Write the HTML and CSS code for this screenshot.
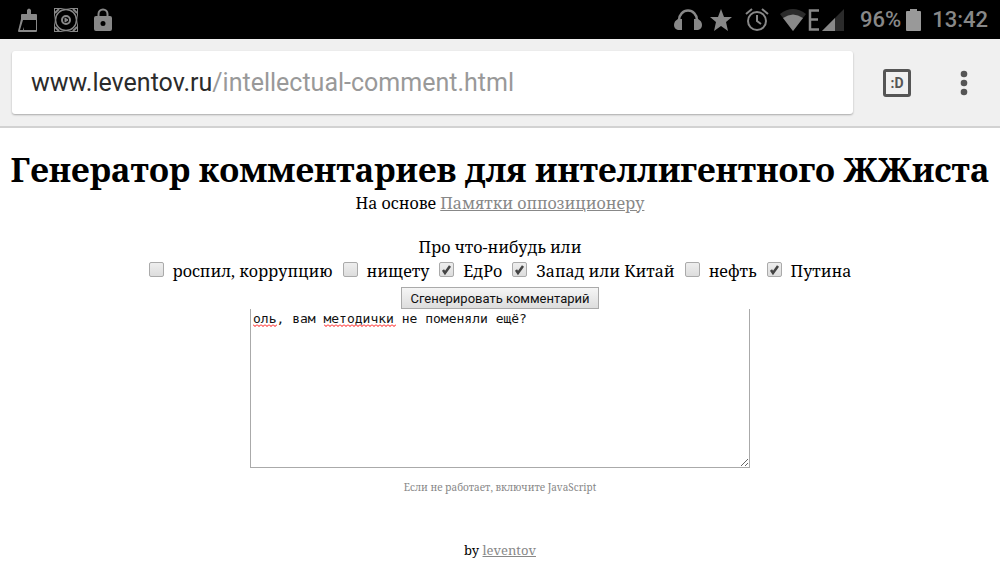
FILE: index.html
```
<!DOCTYPE html>
<html lang="ru">
<head>
    <meta charset="UTF-8">
    <meta name="viewport" content="width=device-width, initial-scale=1.0">
    <title>Генератор комментариев</title>
    <link rel="stylesheet" href="styles.css">
</head>
<body>
    <div class="status-bar">
        <svg class="icon-cleaner" width="20" height="24" viewBox="0 0 20 24">
            <path fill="#888" fill-rule="evenodd" d="M9 2q2-3 4 0v4h5q1 0 1 1v16q0 1-1 1H1q-1 0-1-1L3 11V7q0-1 1-1h5zM5 12L2 22h3l1-3v3h12V12z"/>
        </svg>
        <svg class="icon-disc" width="26" height="26" viewBox="0 0 26 26" fill="none" stroke="#888">
            <rect x="1.500" y="1.500" width="23" height="23" stroke-width="1"/>
            <path d="M2 6l4-4M20 2l4 4M24 20l-4 4M6 24l-4-4" stroke-width="2"/>
            <circle cx="13" cy="13" r="11.500" stroke="#000" stroke-width="1"/>
            <circle cx="13" cy="13" r="10.500" stroke-width="1.500"/>
            <circle cx="13" cy="13" r="4" stroke-width="2"/>
            <path d="M12 11l3 2-3 2z" fill="#888"/>
        </svg>
        <svg class="icon-lock" width="18" height="24" viewBox="0 0 18 24">
            <path d="M4.500 9V6a4.500 4.500 0 0 1 9 0v3" fill="none" stroke="#888" stroke-width="2"/>
            <path fill="#888" fill-rule="evenodd" d="M2 8h14q2 0 2 2v11q0 2-2 2H2q-2 0-2-2V10q0-2 2-2zM9 13a2.500 2.500 0 1 0 0 5a2.500 2.500 0 0 0 0-5z"/>
        </svg>
        <div class="status-right">
            <svg width="28" height="22" viewBox="0 0 28 22">
                <path d="M5 12V11a9 9.500 0 0 1 18 0v1" fill="none" stroke="#888" stroke-width="2.500"/>
                <path fill="#888" d="M8 10v11H4q-4-1-4-5t4-6zM20 10v11h4q4-1 4-5t-4-6z"/>
            </svg>
            <svg class="icon-star" width="24" height="22" viewBox="0 0 24 22">
                <path fill="#888" d="M12 0l3 8h8l-6 5 2 9-7-5-7 5 2-9-6-5h8z"/>
            </svg>
            <svg class="icon-alarm" width="24" height="24" viewBox="0 0 24 24" fill="none" stroke="#888" stroke-width="2">
                <circle cx="12" cy="13" r="9"/>
                <path d="M1 6l6-5M23 6l-6-5M12 7v6l4 3"/>
            </svg>
            <svg class="icon-wifi" width="26" height="22" viewBox="0 0 26 22">
                <path fill="#2b2b2b" d="M13 22L0 5Q13-5 26 5z"/>
                <path fill="#888" d="M13 22L3 9q10-7 20 0z"/>
            </svg>
            <svg width="11" height="22" viewBox="0 0 11 22">
                <path d="M11 1.500H2v19h9M2 10.500h8" fill="none" stroke="#888" stroke-width="2.500"/>
            </svg>
            <svg class="icon-signal" width="22" height="22" viewBox="0 0 22 22">
                <path fill="#2b2b2b" d="M22 0v22H0z"/>
                <path fill="#888" d="M13 9v13H0z"/>
            </svg>
            <span class="battery-level">96%</span>
            <svg class="icon-battery" width="15" height="22" viewBox="0 0 15 22">
                <path fill="#999" d="M4 0h7v2h3q1 0 1 1v18q0 1-1 1H1q-1 0-1-1V3q0-1 1-1h3z"/>
            </svg>
            <span>13:42</span>
        </div>
    </div>
    <div class="toolbar">
        <a class="address" href="#"><span class="host">www.leventov.ru</span>/intellectual-comment.html</a>
        <button class="tabs" type="button" aria-label="Вкладки">:D</button>
        <button class="menu" type="button" aria-label="Меню">
            <svg width="8" height="26" viewBox="0 0 8 26" fill="#555">
                <circle cx="4" cy="4" r="3.300"/>
                <circle cx="4" cy="13" r="3.300"/>
                <circle cx="4" cy="22" r="3.300"/>
            </svg>
        </button>
    </div>
    <main>
        <h1>Генератор комментариев для интеллигентного ЖЖиста</h1>
        <p>На основе <a href="#">Памятки оппозиционеру</a></p>
        <form>
            <p class="about">Про что-нибудь или</p>
            <div class="topics">
                <label><input type="checkbox">роспил, коррупцию</label>
                <label><input type="checkbox">нищету</label>
                <label><input type="checkbox" checked>ЕдРо</label>
                <label><input type="checkbox" checked>Запад или Китай</label>
                <label><input type="checkbox">нефть</label>
                <label><input type="checkbox" checked>Путина</label>
            </div>
            <button class="generate" type="button">Сгенерировать комментарий</button>
            <div class="comment">
                <textarea aria-label="Комментарий" spellcheck="false">оль, вам методички не поменяли ещё?</textarea>
                <span class="typo typo-first"></span>
                <span class="typo typo-second"></span>
            </div>
        </form>
        <p class="hint">Если не работает, включите JavaScript</p>
        <p class="author">by <a href="#">leventov</a></p>
    </main>
</body>
</html>
```
FILE: styles.css
```
* {
    box-sizing: border-box;
}
body {
    margin: 0;
    background: #fff;
    color: #000;
    font-family: "Noto Serif", "DejaVu Serif Condensed", "DejaVu Serif", serif;
    font-size: 16px;
    line-height: 24px;
}
.status-bar {
    display: flex;
    align-items: center;
    height: 39px;
    padding: 0 12px 0 18px;
    background: #000;
    color: #888;
    font-family: Roboto, sans-serif;
    font-size: 22px;
    font-weight: 500;
}
.icon-disc {
    margin-left: 15px;
}
.icon-lock {
    margin-left: 15px;
}
.status-right {
    display: flex;
    align-items: center;
    margin-left: auto;
}
.icon-star {
    margin-left: 7px;
}
.icon-alarm {
    margin-left: 12px;
}
.icon-wifi {
    margin-left: 11px;
}
.icon-wifi + svg {
    margin-left: 2px;
}
.icon-signal {
    margin-left: 3px;
}
.battery-level {
    margin-left: 16px;
}
.icon-battery {
    margin: 0 11px 0 5px;
}
.toolbar {
    display: flex;
    align-items: center;
    padding: 12px;
    background: #f0f0f0;
    border-bottom: 2px solid #d2d2d2;
}
.address {
    flex: 1;
    min-width: 0;
    padding: 0 19px;
    background: #fff;
    border-radius: 3px;
    box-shadow: 0 1px 2px rgba(0,0,0,0.3);
    color: #999;
    font-family: Roboto, sans-serif;
    font-size: 25px;
    line-height: 63px;
    text-decoration: none;
    white-space: nowrap;
    overflow: hidden;
}
.host {
    color: #2b2b2b;
}
.tabs {
    width: 28px;
    height: 28px;
    margin: 0 41px 0 30px;
    padding: 0;
    border: 3px solid #555;
    border-radius: 3px;
    background: none;
    color: #555;
    font: bold 14px Roboto, sans-serif;
}
.menu {
    display: flex;
    justify-content: center;
    width: 24px;
    margin-right: 12px;
    padding: 0;
    border: none;
    background: none;
}
main {
    padding-top: 21px;
    text-align: center;
}
h1 {
    margin: 0;
    font-size: 33px;
    line-height: 42px;
}
p {
    margin: 0;
}
main a {
    color: #888;
}
.about {
    margin-top: 20px;
}
.topics {
    display: flex;
    flex-wrap: wrap;
    justify-content: center;
    gap: 10px;
}
.topics label {
    display: flex;
    align-items: center;
    gap: 9px;
}
.topics input {
    appearance: none;
    width: 15px;
    height: 15px;
    margin: 0 0 4px;
    border: 1px solid #aaa;
    border-radius: 2px;
    background: linear-gradient(#eee, #ddd);
}
.topics input:checked {
    background: url("data:image/svg+xml,%3Csvg xmlns='http://www.w3.org/2000/svg' viewBox='0 0 13 13'%3E%3Cpath d='M3 7l2 3 5-7' fill='none' stroke='%23444' stroke-width='2.5'/%3E%3C/svg%3E"), linear-gradient(#eee, #ddd);
}
.generate {
    display: block;
    height: 22px;
    margin: 4px auto 0;
    padding: 0 8px;
    border: 1px solid #aaa;
    background: linear-gradient(#f5f5f5, #ddd);
    color: #111;
    font: 13px Roboto, sans-serif;
}
.comment {
    position: relative;
    width: 50%;
    margin: 0 auto;
}
.comment textarea {
    display: block;
    width: 100%;
    height: 159px;
    padding: 2px;
    border: 1px solid #aaa;
    border-top: none;
    color: #111;
    font: 13px/16px "DejaVu Sans Mono", monospace;
}
/* spelling marks */
.typo {
    position: absolute;
    top: 15px;
    height: 3px;
    background: url("data:image/svg+xml,%3Csvg xmlns='http://www.w3.org/2000/svg' width='4' height='3'%3E%3Cpath d='M0 .5l2 2 2-2' fill='none' stroke='red'/%3E%3C/svg%3E") repeat-x;
}
.typo-first {
    left: 3px;
    width: 24px;
}
.typo-second {
    left: 74px;
    width: 72px;
}
.hint {
    margin-top: 7px;
    color: #888;
    font-size: 10px;
}
.author {
    margin-top: 39px;
    font-size: 13px;
}
```
